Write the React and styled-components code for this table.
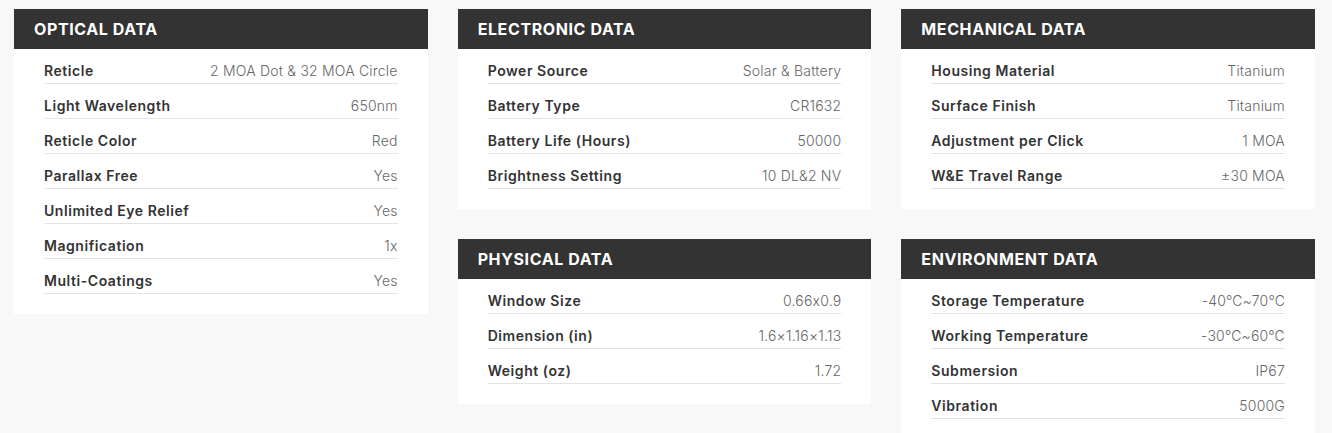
import React from 'react';
import styled, { createGlobalStyle } from 'styled-components';

const GlobalStyle = createGlobalStyle`
  html, body {
    margin: 0;
    padding: 0;
    background: #f8f8f8;
  }
  body {
    font-family: Inter, 'Open Sans', sans-serif;
  }
`;

const Page = styled('div')({
  width: '1301px',
  padding: '9px 0 0 14px',
  display: 'grid',
  gridTemplateColumns: 'repeat(3, 1fr)',
  columnGap: '30px',
  alignItems: 'start',
});

const Column = styled('div')({
  display: 'flex',
  flexDirection: 'column',
  gap: '30px',
});

const Card = styled('section')({
  background: '#fff',
  paddingBottom: '20px',
});

const CardHeader = styled('h3')({
  margin: 0,
  height: '40px',
  padding: '0 20px 1px',
  boxSizing: 'border-box',
  display: 'flex',
  alignItems: 'center',
  background: '#333',
  color: '#fff',
  fontSize: '16px',
  fontWeight: 700,
  textTransform: 'uppercase',
  letterSpacing: '0.6px',
});

const Rows = styled('div')({
  padding: '0 30px',
});

const Row = styled('div')({
  display: 'flex',
  justifyContent: 'space-between',
  alignItems: 'center',
  height: '20px',
  padding: '12px 0 2px',
  borderBottom: '1px solid #e4e4e4',
  lineHeight: '20px',
});

const Label = styled('span')({
  fontSize: '14px',
  fontWeight: 600,
  color: '#333',
  letterSpacing: '0.55px',
});

const Value = styled('span')({
  fontSize: '14px',
  fontWeight: 300,
  color: '#666',
  letterSpacing: '0.2px',
});

const SpecCard = ({ title, rows }) => (
  <Card>
    <CardHeader>{title}</CardHeader>
    <Rows>
      {rows.map(([label, value]) => (
        <Row key={label}>
          <Label>{label}</Label>
          <Value>{value}</Value>
        </Row>
      ))}
    </Rows>
  </Card>
);

const columns = [
  [
    {
      title: 'Optical Data',
      rows: [
        ['Reticle', '2 MOA Dot & 32 MOA Circle'],
        ['Light Wavelength', '650nm'],
        ['Reticle Color', 'Red'],
        ['Parallax Free', 'Yes'],
        ['Unlimited Eye Relief', 'Yes'],
        ['Magnification', '1x'],
        ['Multi-Coatings', 'Yes'],
      ],
    },
  ],
  [
    {
      title: 'Electronic Data',
      rows: [
        ['Power Source', 'Solar & Battery'],
        ['Battery Type', 'CR1632'],
        ['Battery Life (Hours)', '50000'],
        ['Brightness Setting', '10 DL&2 NV'],
      ],
    },
    {
      title: 'Physical Data',
      rows: [
        ['Window Size', '0.66x0.9'],
        ['Dimension (in)', '1.6×1.16×1.13'],
        ['Weight (oz)', '1.72'],
      ],
    },
  ],
  [
    {
      title: 'Mechanical Data',
      rows: [
        ['Housing Material', 'Titanium'],
        ['Surface Finish', 'Titanium'],
        ['Adjustment per Click', '1 MOA'],
        ['W&E Travel Range', '±30 MOA'],
      ],
    },
    {
      title: 'Environment Data',
      rows: [
        ['Storage Temperature', '-40℃~70℃'],
        ['Working Temperature', '-30℃~60℃'],
        ['Submersion', 'IP67'],
        ['Vibration', '5000G'],
      ],
    },
  ],
];

export default function App() {
  return (
    <>
      <GlobalStyle />
      <Page>
        {columns.map((cards, i) => (
          <Column key={i}>
            {cards.map((card) => (
              <SpecCard key={card.title} {...card} />
            ))}
          </Column>
        ))}
      </Page>
    </>
  );
}
